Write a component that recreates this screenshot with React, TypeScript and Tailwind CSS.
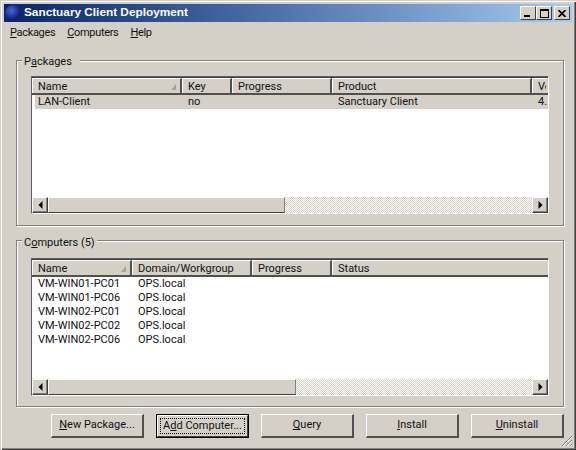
const font = "font-['Roboto','Liberation_Sans',sans-serif]";

function Cell({ w, children, sort, last }: { w: string; children: React.ReactNode; sort?: boolean; last?: boolean }) {
  return (
    <div className={`${w} h-full flex items-center justify-between pl-[5px] pr-[3px] pt-[2px] overflow-hidden whitespace-nowrap border-t border-l border-t-white border-l-white border-r-2 ${last ? "border-r-transparent" : "border-r-[#505050]"}`}>
      <span>{children}</span>
      {sort && (
        <svg width="7" height="8" viewBox="0 0 7 8" className="shrink-0">
          <path d="M6 1 L6 7 L1 7 Z" fill="#a8a49c" />
        </svg>
      )}
    </div>
  );
}

function ScrollBtn({ dir }: { dir: "l" | "r" }) {
  return (
    <div className="w-[16px] h-full shrink-0 flex items-center justify-center bg-[#d4d0c8] border-t border-l border-b border-r border-t-white border-l-white border-b-[#404040] border-r-[#404040] shadow-[inset_-1px_-1px_0_#808080]">
      <svg width="5" height="8" viewBox="0 0 5 8">
        <path d={dir === "l" ? "M4.5 0 L4.5 8 L0.5 4 Z" : "M0.5 0 L0.5 8 L4.5 4 Z"} fill="#000" />
      </svg>
    </div>
  );
}

function ScrollBar({ thumb }: { thumb: string }) {
  return (
    <div className="h-[16px] shrink-0 flex">
      <ScrollBtn dir="l" />
      <div className={`${thumb} h-full shrink-0 bg-[#d4d0c8] border-t border-l border-b border-r border-t-white border-l-white border-b-[#404040] border-r-[#808080]`} />
      <div className="flex-1 h-full bg-[repeating-conic-gradient(#ffffff_0%_25%,#d4d0c8_0%_50%)] bg-[length:2px_2px]" />
      <ScrollBtn dir="r" />
    </div>
  );
}

function Group({ title, u, rest, children, labelW, pad, top }: { title: string; u: string; rest: string; labelW: string; pad: string; top: string; children: React.ReactNode }) {
  return (
    <div className={`relative w-[548px] border border-[#808080] shadow-[inset_1px_1px_0_#ffffff,1px_1px_0_#ffffff] pl-[14px] ${pad}`}>
      <span className={`absolute ${top} left-[5px] ${labelW} h-[14px] leading-[14px] px-[2px] bg-[#d4d0c8] whitespace-nowrap`}>
        {title}<u>{u}</u>{rest}
      </span>
      {children}
    </div>
  );
}

function List({ header, children, thumb }: { header: React.ReactNode; children: React.ReactNode; thumb: string }) {
  return (
    <div className="w-[518px] h-[138px] flex flex-col border-t border-l border-t-[#606060] border-l-[#606060] border-b border-b-white border-r border-r-white">
      <div className="h-[18px] shrink-0 flex bg-[#d4d0c8] border-b-2 border-b-[#505050] border-t border-t-[#404040] overflow-hidden">{header}</div>
      <div className="flex-1 bg-white overflow-hidden">{children}</div>
      <ScrollBar thumb={thumb} />
    </div>
  );
}

function Btn({ children, active, w }: { children: React.ReactNode; active?: boolean; w: string }) {
  if (active) {
    return (
      <div className={`${w} h-[24px] border border-black whitespace-nowrap`}>
        <div className="h-full border-t border-l border-b border-r border-t-white border-l-white border-b-[#404040] border-r-[#404040] p-[2px]">
          <div className="h-full flex items-center justify-center border border-dotted border-black">{children}</div>
        </div>
      </div>
    );
  }
  return (
    <div className={`${w} h-[24px] flex items-center justify-center whitespace-nowrap border-t border-l border-b-2 border-r-2 border-t-white border-l-white border-b-[#505050] border-r-[#505050]`}>
      {children}
    </div>
  );
}

const computers = ["VM-WIN01-PC01", "VM-WIN01-PC06", "VM-WIN02-PC01", "VM-WIN02-PC02", "VM-WIN02-PC06"];

export default function App() {
  return (
    <div className={`${font} relative w-[576px] h-[450px] flex flex-col bg-[#d4d0c8] text-[11px] text-[#111] p-[4px] overflow-hidden shadow-[inset_1px_1px_0_#d4d0c8,inset_2px_2px_0_#ffffff,inset_-1px_-1px_0_#404040,inset_-2px_-2px_0_#808080]`}>
      <div className="h-[18px] shrink-0 flex items-center justify-between bg-gradient-to-r from-[#0a246a] to-[#a6caf0] pr-[2px]">
        <div className="flex items-center">
          <div className="w-[16px] h-[16px] ml-[1px] rounded-full bg-[radial-gradient(circle_at_40%_35%,#4a66d8,#14207c_60%,#0a1450)]" />
          <span className="ml-[3px] font-bold text-white text-[11.8px] font-['Liberation_Sans',sans-serif]">Sanctuary Client Deployment</span>
        </div>
        <div className="flex items-center">
          <div className="w-[16px] h-[14px] bg-[#d4d0c8] border-t border-l border-b border-r border-t-white border-l-white border-b-[#404040] border-r-[#404040] flex items-end justify-start pl-[3px] pb-[2px]">
            <div className="w-[6px] h-[2px] bg-black" />
          </div>
          <div className="w-[16px] h-[14px] bg-[#d4d0c8] border-t border-l border-b border-r border-t-white border-l-white border-b-[#404040] border-r-[#404040] flex items-center justify-center">
            <div className="w-[9px] h-[9px] border border-black border-t-2" />
          </div>
          <div className="w-[16px] h-[14px] ml-[2px] bg-[#d4d0c8] border-t border-l border-b border-r border-t-white border-l-white border-b-[#404040] border-r-[#404040] flex items-center justify-center">
            <svg width="8" height="7" viewBox="0 0 8 7"><path d="M0.5 0 L7.5 7 M7.5 0 L0.5 7" stroke="#000" strokeWidth="1.6" /></svg>
          </div>
        </div>
      </div>

      <div className="h-[19px] shrink-0 flex items-center pl-[6px] gap-[12px] pt-[3px] tracking-[-0.33px]">
        <span><u>P</u>ackages</span>
        <span><u>C</u>omputers</span>
        <span><u>H</u>elp</span>
      </div>

      <div className="pl-[12px] pt-[19px] flex flex-col">
        <Group title="P" u="a" rest="ckages" labelW="w-[58px]" pad="pt-[15px]" top="-top-[6px]">
          <div className="h-[149px]">
            <List
              thumb="w-[237px]"
              header={
                <>
                  <Cell w="w-[150px]" sort>Name</Cell>
                  <Cell w="w-[50px]">Key</Cell>
                  <Cell w="w-[100px]">Progress</Cell>
                  <Cell w="w-[200px]">Product</Cell>
                  <Cell w="w-[16px]" last>Ve</Cell>
                </>
              }
            >
              <div className="h-[14px] ml-[3px] flex items-center bg-[#d4d0c8] whitespace-nowrap overflow-hidden">
                <span className="w-[150px] pl-[3px] shrink-0">LAN-Client</span>
                <span className="w-[150px] pl-[3px] shrink-0">no</span>
                <span className="w-[197px] pl-[3px] shrink-0">Sanctuary Client</span>
                <span className="pl-[6px]">4.</span>
              </div>
            </List>
          </div>
        </Group>

        <div className="mt-[14px]">
          <Group title="C" u="o" rest="mputers (5)" labelW="w-[75px]" pad="pt-[17px]" top="-top-[5px]">
            <div className="h-[148px]">
              <List
                thumb="w-[248px]"
                header={
                  <>
                    <Cell w="w-[100px]" sort>Name</Cell>
                    <Cell w="w-[120px]">Domain/Workgroup</Cell>
                    <Cell w="w-[80px]">Progress</Cell>
                    <Cell w="w-[216px]" last>Status</Cell>
                  </>
                }
              >
                <div className="flex flex-col">
                  {computers.map((c) => (
                    <div key={c} className="h-[14px] flex items-center whitespace-nowrap">
                      <span className="w-[100px] pl-[6px] shrink-0">{c}</span>
                      <span className="pl-[6px]">OPS.local</span>
                    </div>
                  ))}
                </div>
              </List>
            </div>
          </Group>
        </div>

        <div className="pl-[35px] pt-[7px] flex gap-[12px]">
          <Btn w="w-[93px]"><span><u>N</u>ew Package...</span></Btn>
          <Btn w="w-[93px]" active><span>A<u>d</u>d Computer...</span></Btn>
          <Btn w="w-[93px]"><span><u>Q</u>uery</span></Btn>
          <Btn w="w-[93px]"><span><u>I</u>nstall</span></Btn>
          <Btn w="w-[93px]"><span><u>U</u>ninstall</span></Btn>
        </div>
      </div>

      <svg width="12" height="12" viewBox="0 0 12 12" className="absolute right-[3px] bottom-[3px]">
        <path d="M11 1 L1 11 M11 5 L5 11 M11 9 L9 11" stroke="#808080" strokeWidth="1" />
        <path d="M11 2 L2 11 M11 6 L6 11 M11 10 L10 11" stroke="#ffffff" strokeWidth="1" />
      </svg>
    </div>
  );
}
